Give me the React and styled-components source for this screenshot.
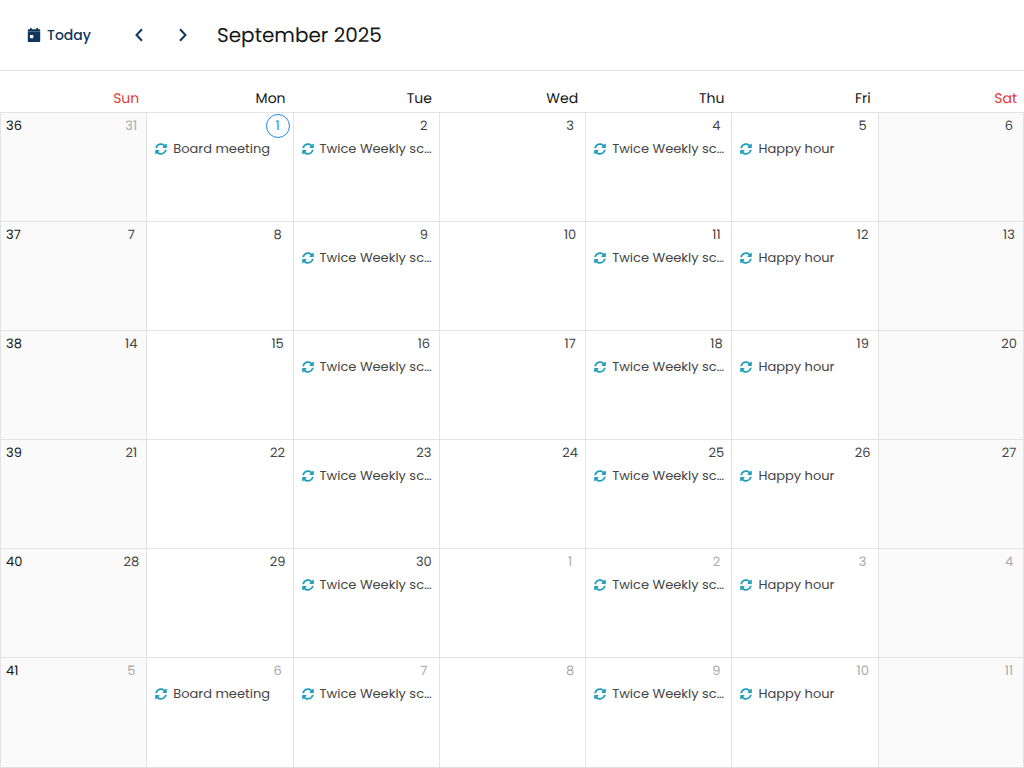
import React from "react";
import styled, { createGlobalStyle } from "styled-components";
import { FaSyncAlt } from "react-icons/fa";

const GlobalStyle = createGlobalStyle`
  *, *::before, *::after {
    box-sizing: border-box;
  }

  body {
    margin: 0;
    background: #fff;
    color: #161616;
    font-family: Poppins, Inter, sans-serif;
    font-size: 14px;
    text-rendering: geometricPrecision;
  }

  button {
    padding: 0;
    border: 0;
    background: none;
    font: inherit;
    cursor: pointer;
  }
`;

const Toolbar = styled.header`
  display: flex;
  align-items: center;
  height: 71px;
  padding: 0 27px;
  border-bottom: 1px solid #e0e0e0;
`;

const TodayButton = styled.button`
  display: flex;
  align-items: center;
  gap: 6px;
  color: #0f365b;
  font-weight: 500;
  line-height: 20px;
`;

const Pager = styled.nav`
  display: flex;
  gap: 20px;
  margin: 0 22px 0 36px;
`;

const PagerButton = styled.button`
  display: grid;
  place-items: center;
  width: 24px;
  height: 24px;
  color: #0f365b;
`;

const Title = styled.h1`
  margin: 0;
  font-size: 20px;
  font-weight: 400;
  line-height: 28px;
`;

const Month = styled.table`
  width: 100%;
  height: calc(100vh - 71px);
  table-layout: fixed;
  border-spacing: 0;
  border-bottom: 1px solid #e0e0e0;
`;

const WeekdayCell = styled.th`
  height: 41px;
  padding: 12px 7px 0 0;
  color: ${(props) => (props.$weekend ? "#e53935" : "#161616")};
  font-weight: 400;
  line-height: 28px;
  text-align: right;
`;

const DayCell = styled.td`
  height: 109px;
  padding: 1px 3px 0 5px;
  border-top: 1px solid #e3e3e3;
  border-left: 1px solid #e3e3e3;
  background: ${(props) => (props.$weekend ? "#fafafa" : "#fff")};
  vertical-align: top;

  &:last-child {
    padding-right: 2px;
    border-right: 1px solid #e3e3e3;
  }

  tr:last-child > & {
    height: 110px;
  }
`;

const DayHeader = styled.div`
  display: flex;
  align-items: center;
  height: 24px;
  margin-bottom: 1px;
  font-size: 13px;
`;

const DayNumber = styled.time`
  display: grid;
  place-items: center;
  width: 24px;
  height: 24px;
  margin-left: auto;
  border: 1px solid ${(props) => (props.$current ? "#1e88e5" : "transparent")};
  border-radius: 50%;
  color: ${(props) =>
    props.$current ? "#1e88e5" : props.$outside ? "#a9a9a9" : "#444"};
`;

const EventButton = styled.button`
  display: flex;
  align-items: center;
  gap: 6px;
  width: 100%;
  height: 20px;
  padding-left: 3px;
  color: #444;
  font-size: 13px;
  white-space: nowrap;

  svg {
    flex: none;
    color: #229ebc;
  }
`;

const weekdays = ["Sun", "Mon", "Tue", "Wed", "Thu", "Fri", "Sat"];

const weeklyEvents = {
  2: "Twice Weekly sc…",
  4: "Twice Weekly sc…",
  5: "Happy hour",
};

const firstDay = new Date(2025, 7, 31);

const weeks = Array.from({ length: 6 }, (_, week) => ({
  number: 36 + week,
  days: weekdays.map((_, weekday) => {
    const date = new Date(2025, 7, firstDay.getDate() + week * 7 + weekday);
    const boardMeeting = weekday === 1 && week % 5 === 0;
    return {
      weekday,
      month: date.getMonth(),
      year: date.getFullYear(),
      day: date.getDate(),
      event: boardMeeting ? "Board meeting" : weeklyEvents[weekday],
    };
  }),
}));

const isWeekend = (weekday) => weekday === 0 || weekday === 6;

function CalendarIcon() {
  return (
    <svg width="14" height="16" viewBox="0 0 14 16" aria-hidden="true">
      <path
        fill="currentColor"
        fillRule="evenodd"
        d="M3 1h1.700v1.300h4.600V1H11v1.300h1.200c.6 0 1 .4 1 1v1.400H.8V3.300c0-.6.4-1 1-1H3zM.8 5.100h12.400v8.900c0 .6-.4 1-1 1H1.800c-.6 0-1-.4-1-1zM3 8v3.300h3.300V8z"
      />
    </svg>
  );
}

function Chevron({ d }) {
  return (
    <svg width="10" height="14" viewBox="0 0 10 14" aria-hidden="true">
      <path d={d} fill="none" stroke="currentColor" strokeWidth="2" />
    </svg>
  );
}

function CalendarToolbar() {
  return (
    <Toolbar>
      <TodayButton type="button">
        <CalendarIcon />
        Today
      </TodayButton>
      <Pager aria-label="Month">
        <PagerButton type="button" aria-label="Previous month">
          <Chevron d="M8 1.200 2.500 7 8 12.800" />
        </PagerButton>
        <PagerButton type="button" aria-label="Next month">
          <Chevron d="M2 1.200 7.500 7 2 12.800" />
        </PagerButton>
      </Pager>
      <Title>September 2025</Title>
    </Toolbar>
  );
}

function Day({ day, weekNumber }) {
  const inMonth = day.month === 8;
  const date = [day.year, day.month + 1, day.day]
    .map((part) => String(part).padStart(2, "0"))
    .join("-");

  return (
    <DayCell $weekend={isWeekend(day.weekday)}>
      <DayHeader>
        {day.weekday === 0 && <span>{weekNumber}</span>}
        <DayNumber
          dateTime={date}
          $current={inMonth && day.day === 1}
          $outside={!inMonth}
        >
          {day.day}
        </DayNumber>
      </DayHeader>
      {day.event && (
        <EventButton type="button">
          <FaSyncAlt size={12} aria-hidden="true" />
          {day.event}
        </EventButton>
      )}
    </DayCell>
  );
}

function App() {
  return (
    <>
      <GlobalStyle />
      <CalendarToolbar />
      <main>
        <Month>
          <thead>
            <tr>
              {weekdays.map((name, index) => (
                <WeekdayCell key={name} scope="col" $weekend={isWeekend(index)}>
                  {name}
                </WeekdayCell>
              ))}
            </tr>
          </thead>
          <tbody>
            {weeks.map((week) => (
              <tr key={week.number}>
                {week.days.map((day) => (
                  <Day
                    key={day.weekday}
                    day={day}
                    weekNumber={week.number}
                  />
                ))}
              </tr>
            ))}
          </tbody>
        </Month>
      </main>
    </>
  );
}

export default App;
